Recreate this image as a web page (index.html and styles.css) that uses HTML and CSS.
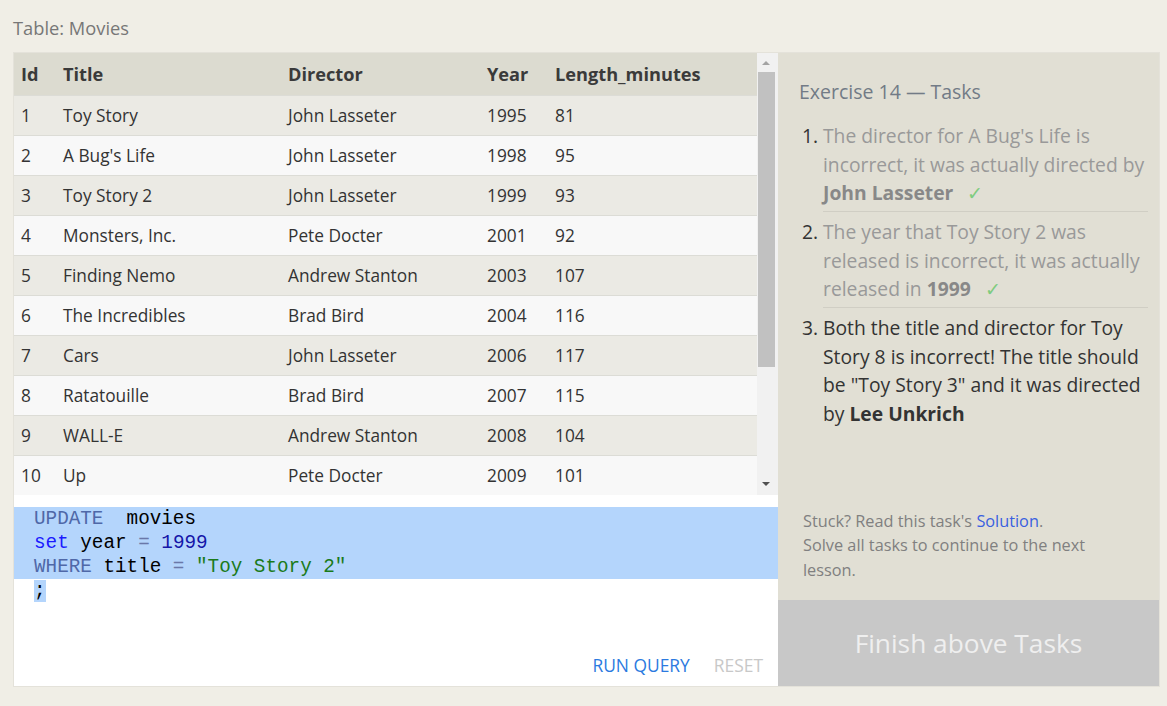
FILE: index.html
```html
<!DOCTYPE html>
<html>
<head>
<meta charset="utf-8">
<link rel="stylesheet" href="styles.css">
</head>
<body>
<div class="page">
  <div class="caption">Table: Movies</div>
  <div class="main">
    <div class="left">
      <div class="table-wrap">
        <div class="table-scroll">
          <table class="movies">
            <thead>
              <tr><th class="c-id">Id</th><th class="c-title">Title</th><th class="c-dir">Director</th><th class="c-year">Year</th><th>Length_minutes</th></tr>
            </thead>
            <tbody>
              <tr><td>1</td><td>Toy Story</td><td>John Lasseter</td><td>1995</td><td>81</td></tr>
              <tr><td>2</td><td>A Bug's Life</td><td>John Lasseter</td><td>1998</td><td>95</td></tr>
              <tr><td>3</td><td>Toy Story 2</td><td>John Lasseter</td><td>1999</td><td>93</td></tr>
              <tr><td>4</td><td>Monsters, Inc.</td><td>Pete Docter</td><td>2001</td><td>92</td></tr>
              <tr><td>5</td><td>Finding Nemo</td><td>Andrew Stanton</td><td>2003</td><td>107</td></tr>
              <tr><td>6</td><td>The Incredibles</td><td>Brad Bird</td><td>2004</td><td>116</td></tr>
              <tr><td>7</td><td>Cars</td><td>John Lasseter</td><td>2006</td><td>117</td></tr>
              <tr><td>8</td><td>Ratatouille</td><td>Brad Bird</td><td>2007</td><td>115</td></tr>
              <tr><td>9</td><td>WALL-E</td><td>Andrew Stanton</td><td>2008</td><td>104</td></tr>
              <tr><td>10</td><td>Up</td><td>Pete Docter</td><td>2009</td><td>101</td></tr>
            </tbody>
          </table>
        </div>
        <div class="scrollbar">
          <div class="arrow up"></div>
          <div class="track"><div class="thumb"></div></div>
          <div class="arrow down"></div>
        </div>
      </div>
      <div class="editor">
        <div class="code">
          <div class="line full"><span class="kw">UPDATE</span>  movies</div>
          <div class="line full"><span class="kw2">set</span> year <span class="op">=</span> <span class="num">1999</span></div>
          <div class="line full"><span class="kw">WHERE</span> title <span class="op">=</span> <span class="str">"Toy Story 2"</span></div>
          <div class="line"><span class="sel">;</span></div>
        </div>
        <div class="actions">
          <span class="btn run">RUN QUERY</span>
          <span class="btn reset">RESET</span>
        </div>
      </div>
    </div>
    <div class="right">
      <div class="tasks">
        <h2 class="tasks-title">Exercise 14 — Tasks</h2>
        <ol class="task-list">
          <li class="done">The director for A Bug's Life is incorrect, it was actually directed by <b>John Lasseter</b><span class="check">✓</span></li>
          <li class="done">The year that Toy Story 2 was released is incorrect, it was actually released in <b>1999</b><span class="check">✓</span></li>
          <li>Both the title and director for Toy Story 8 is incorrect! The title should be "Toy Story 3" and it was directed by <b>Lee Unkrich</b></li>
        </ol>
        <div class="spacer"></div>
        <p class="hint">Stuck? Read this task's <a class="link">Solution</a>.<br>Solve all tasks to continue to the next lesson.</p>
      </div>
      <div class="finish">Finish above Tasks</div>
    </div>
  </div>
</div>
</body>
</html>
```

FILE: styles.css
```css
html, body {
  margin: 0;
  padding: 0;
  background: #f0eee6;
  font-family: "Open Sans", "Noto Sans", sans-serif;
}

.page {
  padding: 14px 7px 0 13px;
}

.caption {
  font-size: 18.3px;
  color: #777;
  line-height: 28px;
  height: 38px;
}

.main {
  display: flex;
  height: 635px;
  border: 1px solid #e4e2da;
  box-sizing: border-box;
  width: 1147px;
}

.left {
  width: 764px;
  display: flex;
  flex-direction: column;
  background: #fff;
}

.table-wrap {
  height: 442px;
  display: flex;
  background: #f1f1f1;
}

.table-scroll {
  width: 743px;
  overflow: hidden;
}

.movies {
  width: 100%;
  border-collapse: collapse;
  font-size: 17.3px;
  color: #333;
}

.movies th {
  background: #dcdbd0;
  text-align: left;
  font-weight: 700;
  height: 42px;
  padding: 0 7px;
  color: #3a3a3a;
  font-size: 18.2px;
}

.movies td {
  height: 39px;
  padding: 0 7px;
  border-top: 1px solid #dcdcd6;
}

.movies tbody tr:nth-child(odd) td {
  background: #ebeae4;
}

.movies tbody tr:nth-child(even) td {
  background: #f8f8f8;
}

.c-id { width: 28px; }
.c-title { width: 211px; }
.c-dir { width: 185px; }
.c-year { width: 54px; }

.scrollbar {
  width: 20px;
  display: flex;
  flex-direction: column;
  background: #f1f1f1;
}

.arrow {
  height: 19px;
  position: relative;
}

.arrow::after {
  content: "";
  position: absolute;
  left: 5px;
  width: 0;
  height: 0;
  border-left: 4px solid transparent;
  border-right: 4px solid transparent;
}

.arrow.up::after {
  top: 8px;
  border-bottom: 4px solid #a3a3a3;
}

.arrow.down::after {
  top: 6px;
  border-top: 4px solid #505050;
}

.track {
  flex: 1;
  padding: 0 2px 0 1px;
}

.thumb {
  height: 295px;
  background: #c1c1c1;
}

.editor {
  flex: 1;
  display: flex;
  flex-direction: column;
  padding-top: 12px;
}

.code {
  font-family: "Liberation Mono", "DejaVu Sans Mono", monospace;
  font-size: 19.3px;
  line-height: 24px;
  color: #000;
}

.line {
  padding-left: 20px;
  white-space: pre;
}

.line.full {
  background: #b4d5fc;
}

.sel {
  background: #b4d5fc;
}

.kw { color: #4f68a8; }
.kw2 { color: #1a1aff; }
.num { color: #1515a8; }
.op { color: #6a78a8; }
.str { color: #1a7a1a; }

.actions {
  margin-top: auto;
  display: flex;
  justify-content: flex-end;
  gap: 24px;
  padding: 0 15px 9px 0;
  font-size: 17.4px;
}

.btn.run { color: #2b7ae0; }
.btn.reset { color: #c8c8c8; }

.right {
  flex: 1;
  display: flex;
  flex-direction: column;
  background: #e1dfd4;
}

.tasks {
  flex: 1;
  display: flex;
  flex-direction: column;
  padding: 24px 11px 0 21px;
}

.tasks-title {
  margin: 0;
  font-weight: 400;
  font-size: 19.5px;
  line-height: 30px;
  color: #727b86;
}

.task-list {
  margin: 15px 0 0 0;
  padding-left: 24px;
  font-size: 19.3px;
  line-height: 28.5px;
  color: #333;
}

.task-list li {
  padding-bottom: 3px;
  margin-bottom: 6.5px;
}

.task-list li.done {
  color: #999;
  border-bottom: 1px solid #d0cec4;
}

.task-list li.done::marker {
  color: #333;
}

.task-list li.done b {
  color: #888;
}

.check {
  color: #7fcc7f;
  margin-left: 14px;
}

.spacer { flex: 1; }

.hint {
  margin: 0 0 18px 4px;
  max-width: 295px;
  font-size: 16.3px;
  line-height: 24.5px;
  color: #808080;
}

.link { color: #3a5fe0; }

.finish {
  height: 86px;
  background: #c8c8c8;
  color: #efefef;
  font-size: 26.3px;
  display: flex;
  align-items: center;
  justify-content: center;
}
```
